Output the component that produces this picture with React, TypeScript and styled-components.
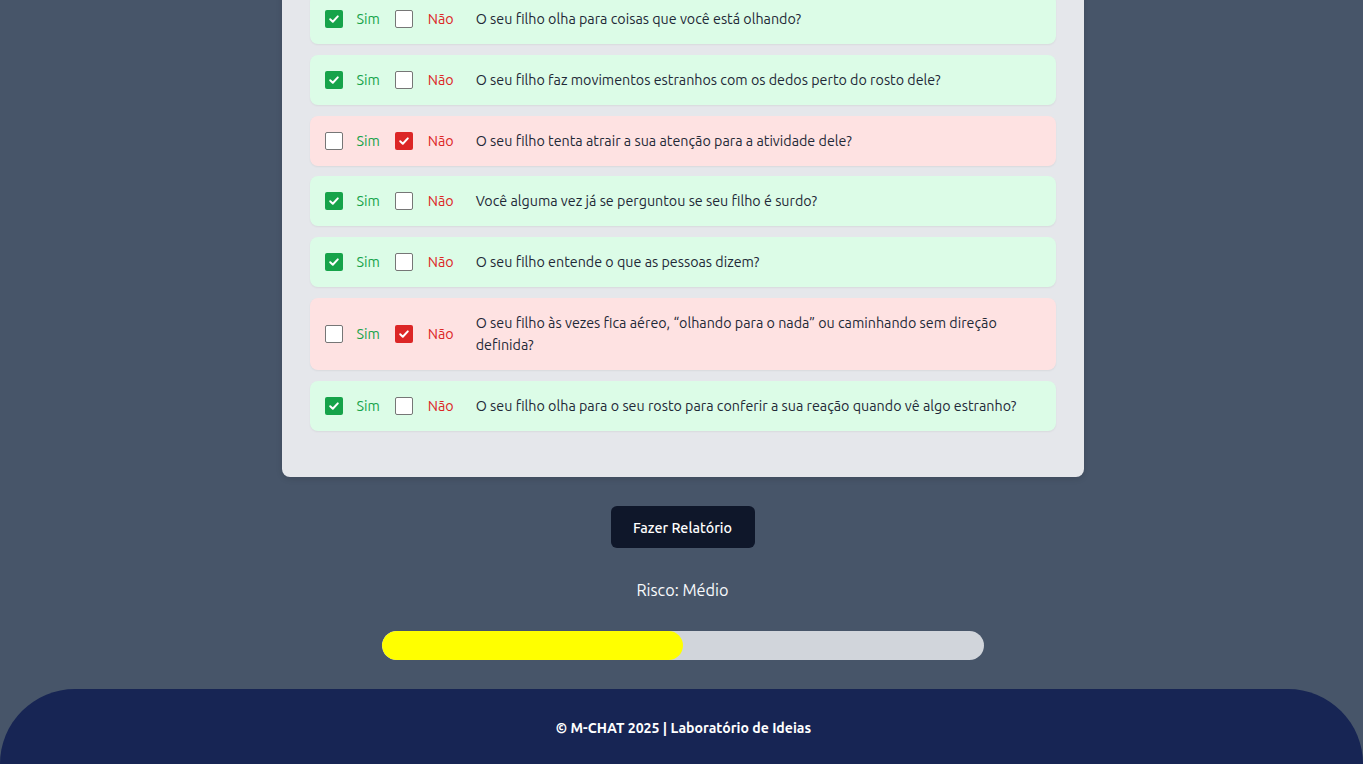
import React from "react";
import styled, { createGlobalStyle } from "styled-components";

const GlobalStyle = createGlobalStyle`
  html, body {
    margin: 0;
    padding: 0;
    background: #475569;
    font-family: "Ubuntu", "Noto Sans", "Liberation Sans", sans-serif;
    overflow: hidden;
  }
  * { box-sizing: border-box; }
`;

const Page = styled.div`
  display: flex;
  flex-direction: column;
  align-items: center;
  min-height: 764px;
  padding-left: 2px;
`;

const Card = styled.section`
  width: 802px;
  margin-top: -34px;
  padding: 28px 28px 35.5px;
  background: #e5e7eb;
  border-radius: 8px;
  box-shadow: 0 2px 6px rgba(0, 0, 0, 0.12);
`;

const Row = styled.div<{ $no: boolean }>`
  display: flex;
  align-items: center;
  padding: 14px 16px 14px 15px;
  margin-bottom: 10.8px;
  border-radius: 8px;
  background: ${(p) => (p.$no ? "#fee2e2" : "#dcfce7")};
  box-shadow: 0 1px 2px rgba(0, 0, 0, 0.06);
`;

const Box = styled.span<{ $checked: boolean; $tone: "green" | "red" }>`
  flex: none;
  width: 18px;
  height: 18px;
  border-radius: 2px;
  display: flex;
  align-items: center;
  justify-content: center;
  background: ${(p) =>
    p.$checked ? (p.$tone === "green" ? "#16a34a" : "#dc2626") : "#ffffff"};
  border: ${(p) => (p.$checked ? "none" : "1px solid #767676")};
`;

const OptLabel = styled.span<{ $tone: "green" | "red"; $before: number; $after: number }>`
  flex: none;
  margin: 0 ${(p) => p.$after}px 0 ${(p) => p.$before}px;
  font-size: 14.3px;
  font-weight: 400;
  line-height: 22px;
  color: ${(p) => (p.$tone === "green" ? "#16a34a" : "#dc2626")};
`;

const Question = styled.span`
  font-size: 14.3px;
  line-height: 22px;
  color: #1f2937;
`;

const Button = styled.button`
  margin-top: 28.5px;
  width: 144px;
  height: 42px;
  padding: 2px 0 0;
  border: none;
  border-radius: 6px;
  background: #0f172a;
  color: #ffffff;
  font-family: inherit;
  font-size: 14.3px;
  font-weight: 500;
`;

const Risk = styled.p`
  margin: 30px 0 0;
  font-size: 16.3px;
  line-height: 24px;
  color: #f8fafc;
`;

const Track = styled.div`
  margin-top: 29px;
  width: 602px;
  height: 29px;
  border-radius: 999px;
  background: #d1d5db;
  overflow: hidden;
`;

const Fill = styled.div`
  height: 100%;
  border-radius: 999px;
  background: #ffff00;
`;

const Footer = styled.footer`
  margin-top: 29px;
  margin-left: -2px;
  width: calc(100% + 2px);
  height: 75px;
  padding: 3px 0 0 4px;
  border-radius: 80px 80px 0 0;
  background: #172554;
  display: flex;
  align-items: center;
  justify-content: center;
  color: #ffffff;
  font-size: 14.1px;
  font-weight: 700;
`;

const Check = () => (
  <svg width="12" height="12" viewBox="0 0 12 12" fill="none">
    <path
      d="M2.2 6.3 L4.8 8.8 L9.8 3.4"
      stroke="#ffffff"
      strokeWidth="2"
      strokeLinecap="round"
      strokeLinejoin="round"
    />
  </svg>
);

const questions: { text: string; yes: boolean }[] = [
  { text: "O seu filho olha para coisas que você está olhando?", yes: true },
  { text: "O seu filho faz movimentos estranhos com os dedos perto do rosto dele?", yes: true },
  { text: "O seu filho tenta atrair a sua atenção para a atividade dele?", yes: false },
  { text: "Você alguma vez já se perguntou se seu filho é surdo?", yes: true },
  { text: "O seu filho entende o que as pessoas dizem?", yes: true },
  {
    text: "O seu filho às vezes fica aéreo, “olhando para o nada” ou caminhando sem direção definida?",
    yes: false,
  },
  {
    text: "O seu filho olha para o seu rosto para conferir a sua reação quando vê algo estranho?",
    yes: true,
  },
];

export default function App() {
  return (
    <>
      <GlobalStyle />
      <Page>
        <Card>
          {questions.map((q) => (
            <Row key={q.text} $no={!q.yes}>
              <Box $checked={q.yes} $tone="green">{q.yes && <Check />}</Box>
              <OptLabel $tone="green" $before={14} $after={15}>Sim</OptLabel>
              <Box $checked={!q.yes} $tone="red">{!q.yes && <Check />}</Box>
              <OptLabel $tone="red" $before={15} $after={22}>Não</OptLabel>
              <Question>{q.text}</Question>
            </Row>
          ))}
        </Card>
        <Button>Fazer Relatório</Button>
        <Risk>Risco: Médio</Risk>
        <Track>
          <Fill style={{ width: "50%" }} />
        </Track>
        <Footer>© M-CHAT 2025 | Laboratório de Ideias</Footer>
      </Page>
    </>
  );
}
